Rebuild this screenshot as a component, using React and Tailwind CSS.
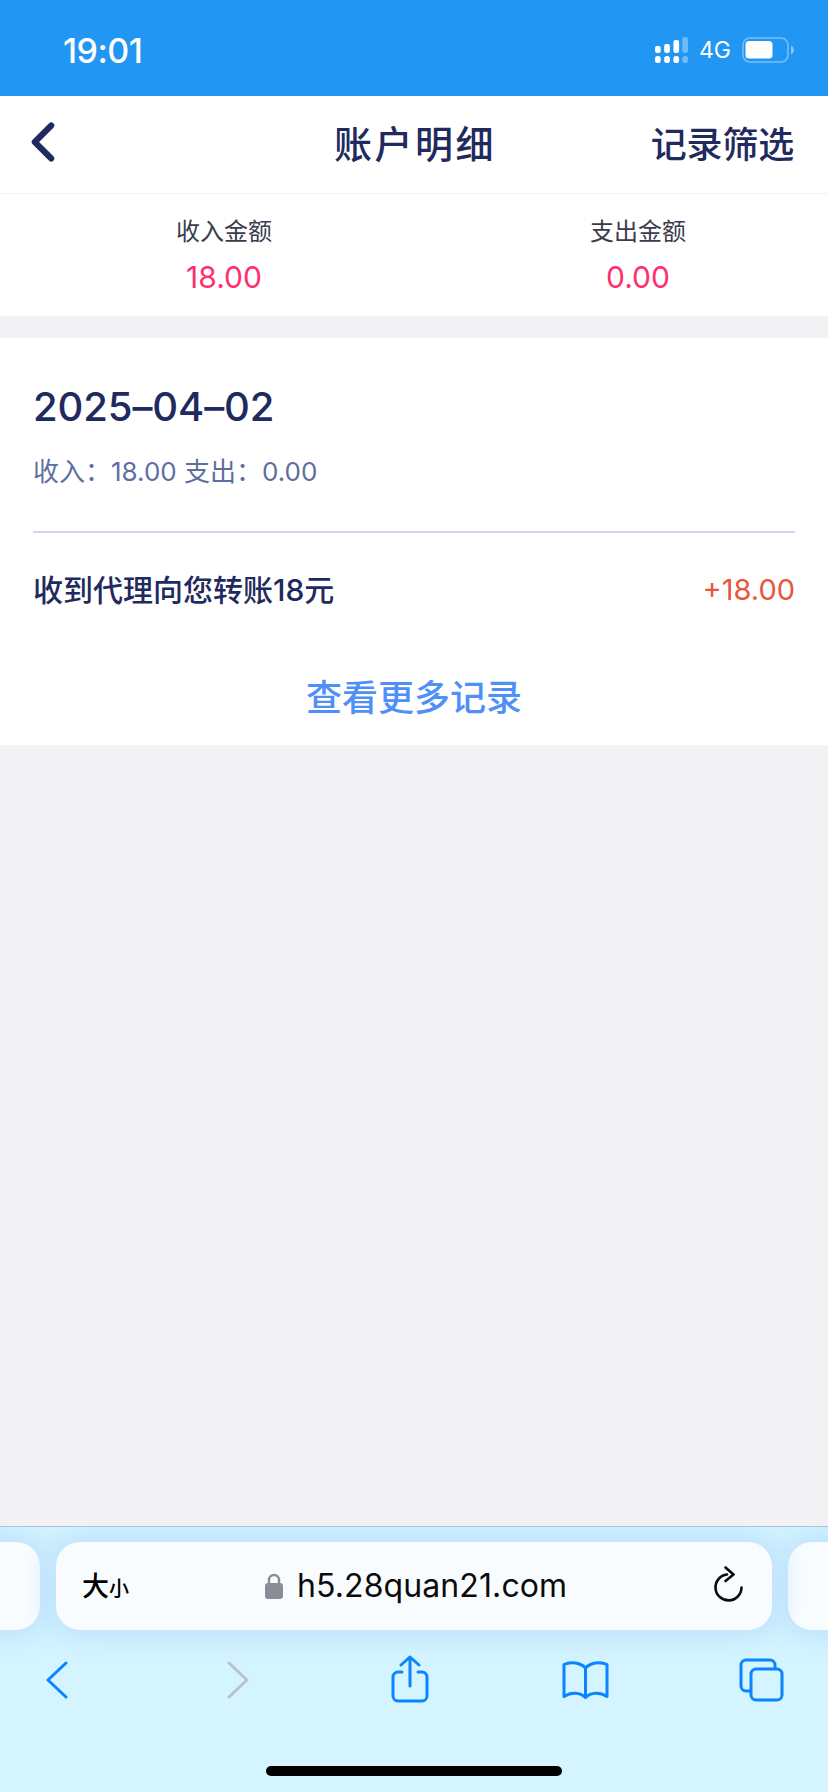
import { ChevronLeft } from "lucide-react";

const fontStack = "font-['Inter','Noto_Sans_CJK_SC',sans-serif]";

function SignalIcon() {
  return (
    <svg width="33" height="26" viewBox="0 0 33 26" fill="#fff">
      <rect x="0" y="9" width="5.700" height="7" rx="2" />
      <rect x="9.200" y="7" width="5.700" height="9" rx="2" />
      <rect x="18.400" y="3" width="5.700" height="13" rx="2" />
      <rect x="27.300" y="0" width="5.700" height="16" rx="2" opacity="0.35" />
      <rect x="0" y="19" width="5.700" height="7" rx="2.500" />
      <rect x="9.200" y="19" width="5.700" height="7" rx="2.500" />
      <rect x="18.400" y="19" width="5.700" height="7" rx="2.500" />
      <rect x="27.300" y="19" width="5.700" height="7" rx="2.500" opacity="0.35" />
    </svg>
  );
}

function BatteryIcon() {
  return (
    <svg width="52" height="26" viewBox="0 0 52 26">
      <rect x="1" y="1" width="45" height="24" rx="7" fill="none" stroke="#fff" strokeOpacity="0.4" strokeWidth="1.600" />
      <rect x="3.500" y="4" width="27" height="17.500" rx="3.500" fill="#fff" />
      <path d="M49 8.500c1.700.6 3 2.300 3 4.500s-1.300 3.900-3 4.500z" fill="#fff" fillOpacity="0.45" />
    </svg>
  );
}

function StatusBar() {
  return (
    <div className="h-[96px] bg-[#2196f3] flex items-center justify-between pl-[63px] pr-[34px] pt-[4px] text-white">
      <span className="text-[34px] font-medium tracking-[-0.5px]">19:01</span>
      <div className="flex items-center">
        <SignalIcon />
        <span className="ml-[11px] mr-[11px] text-[23px] leading-none">4G</span>
        <BatteryIcon />
      </div>
    </div>
  );
}

function Summary({ label, value }) {
  return (
    <div className="w-[200px] flex flex-col items-center">
      <span className="text-[24px] leading-[34px] text-[#3a3c4e]">{label}</span>
      <span className="mt-[8px] text-[30px] leading-[40px] text-[#ff2f6d]">{value}</span>
    </div>
  );
}

// bottom toolbar glyphs
function ShareIcon() {
  return (
    <svg width="38" height="48" viewBox="0 0 38 48" fill="none" stroke="#0a84ff" strokeWidth="3" strokeLinecap="round" strokeLinejoin="round">
      <path d="M11 17H7a5 5 0 0 0-5 5v19a5 5 0 0 0 5 5h24a5 5 0 0 0 5-5V22a5 5 0 0 0-5-5h-4" />
      <path d="M19 31V2M10 10l9-8 9 8" />
    </svg>
  );
}

function BookIcon() {
  return (
    <svg width="47" height="38" viewBox="0 0 47 38" fill="none" stroke="#0a84ff" strokeWidth="3" strokeLinejoin="round" strokeLinecap="round">
      <path d="M23.500 7C19 2 9 0 2 3.500V35.500C9 31 18 31 23.500 36.500C29 31 38 31 45 35.500V3.500C38 0 28 2 23.500 7Z" />
      <path d="M23.500 7V36" />
    </svg>
  );
}

function TabsIcon() {
  return (
    <svg width="45" height="44" viewBox="0 0 45 44" fill="none" stroke="#0a84ff" strokeWidth="3">
      <path d="M11 33H7a5 5 0 0 1-5-5V7a5 5 0 0 1 5-5h24a5 5 0 0 1 5 5v4" />
      <rect x="12" y="11" width="31" height="31" rx="5" />
    </svg>
  );
}

function ReloadIcon() {
  return (
    <svg width="30" height="36" viewBox="0 0 30 36" fill="none" stroke="#0b0b0b" strokeWidth="2.600" strokeLinecap="round" strokeLinejoin="round">
      <path d="M14 8.500a13 13 0 1 0 14.500 13" />
      <path d="M12.500 1.500l8 7-8 6.500" />
    </svg>
  );
}

function LockIcon() {
  return (
    <svg width="18" height="26" viewBox="0 0 18 26">
      <path d="M4 11V7a5 5 0 0 1 10 0v4" fill="none" stroke="#8a8d96" strokeWidth="2.400" />
      <rect x="0" y="10" width="18" height="16" rx="3" fill="#8a8d96" />
    </svg>
  );
}

function BrowserBar() {
  return (
    <div className="relative h-[266px] bg-[#d4f4ff] border-t border-[#a9c3d6] overflow-hidden">
      <div className="h-[88px] mt-[15px] flex gap-[16px] ml-[-660px] w-[1648px]">
        <div className="shrink-0 w-[700px] rounded-[24px] bg-[#f8fcff] shadow-[0_0_26px_8px_#bfe2fd]" />
        <div className="shrink-0 w-[716px] rounded-[24px] bg-[#f8fcff] shadow-[0_0_26px_8px_#bfe2fd] flex items-center pl-[26px] pr-[29px] relative">
          <span className="text-[27px] leading-none text-black font-medium">大</span>
          <span className="text-[20px] leading-none text-black font-medium mt-[5px]">小</span>
          <div className="absolute left-[209px] inset-y-0 flex items-center gap-[14px]">
            <LockIcon />
            <span className="text-[32px] leading-[40px] text-[#0b0b0b] tracking-[0.1px]">h5.28quan21.com</span>
          </div>
          <div className="ml-auto mb-[4px]">
            <ReloadIcon />
          </div>
        </div>
        <div className="shrink-0 w-[200px] rounded-[24px] bg-[#f8fcff] shadow-[0_0_26px_8px_#bfe2fd]" />
      </div>
      <div className="relative mt-[25px] h-[50px] flex items-center pl-[46px]">
        <svg width="22" height="38" viewBox="0 0 22 38" fill="none" stroke="#0a84ff" strokeWidth="3" strokeLinecap="round" strokeLinejoin="round">
          <path d="M20 2L2 19l18 17" />
        </svg>
        <svg className="ml-[159px]" width="22" height="38" viewBox="0 0 22 38" fill="none" stroke="#b9c3cf" strokeWidth="3" strokeLinecap="round" strokeLinejoin="round">
          <path d="M2 2l18 17L2 36" />
        </svg>
        <div className="ml-[142px] mb-[2px]">
          <ShareIcon />
        </div>
        <div className="ml-[133px]">
          <BookIcon />
        </div>
        <div className="ml-[130px]">
          <TabsIcon />
        </div>
      </div>
      <div className="absolute left-[266px] bottom-[16px] w-[296px] h-[10px] rounded-full bg-black" />
    </div>
  );
}

export default function App() {
  return (
    <div className={`${fontStack} w-[828px] h-[1792px] flex flex-col bg-[#f2f2f4]`}>
      <StatusBar />

      {/* nav header */}
      <div className="relative h-[98px] bg-white border-b border-[#f2f2f4] flex items-center justify-between pl-[10px] pr-[34px]">
        <ChevronLeft size={66} strokeWidth={2.2} color="#1f2a5e" className="mb-[5px]" />
        <span className="text-[38px] font-medium leading-none text-[#1f2a5e] absolute left-[334px] top-[29px] tracking-[2.5px]">账户明细</span>
        <span className="text-[36px] font-medium leading-none text-[#1f2a5e] tracking-[-0.2px]">记录筛选</span>
      </div>

      <div className="h-[122px] bg-white flex pl-[124px] gap-[214px] pt-[21px]">
        <Summary label="收入金额" value="18.00" />
        <Summary label="支出金额" value="0.00" />
      </div>

      {/* day record card */}
      <div className="mt-[22px] h-[407px] bg-white px-[33px] pt-[46px]">
        <div className="text-[40px] leading-[46px] font-medium text-[#1f2a5e] tracking-[-0.1px]">2025–04–02</div>
        <div className="mt-[24px] text-[26px] leading-[36px] text-[#5e6f9f]">收入：18.00 支出：0.00</div>
        <div className="mt-[41px] h-[2px] bg-[#d0d4ec]" />
        <div className="mt-[37px] flex items-center justify-between">
          <span className="text-[30px] leading-[40px] font-medium text-[#1f2a5e]">收到代理向您转账18元</span>
          <span className="text-[29px] leading-[40px] text-[#e7573c]">+18.00</span>
        </div>
        <div className="mt-[66px] text-center text-[36px] leading-[44px] font-medium text-[#4f90f8]">查看更多记录</div>
      </div>

      <div className="flex-1" />
      <BrowserBar />
    </div>
  );
}
